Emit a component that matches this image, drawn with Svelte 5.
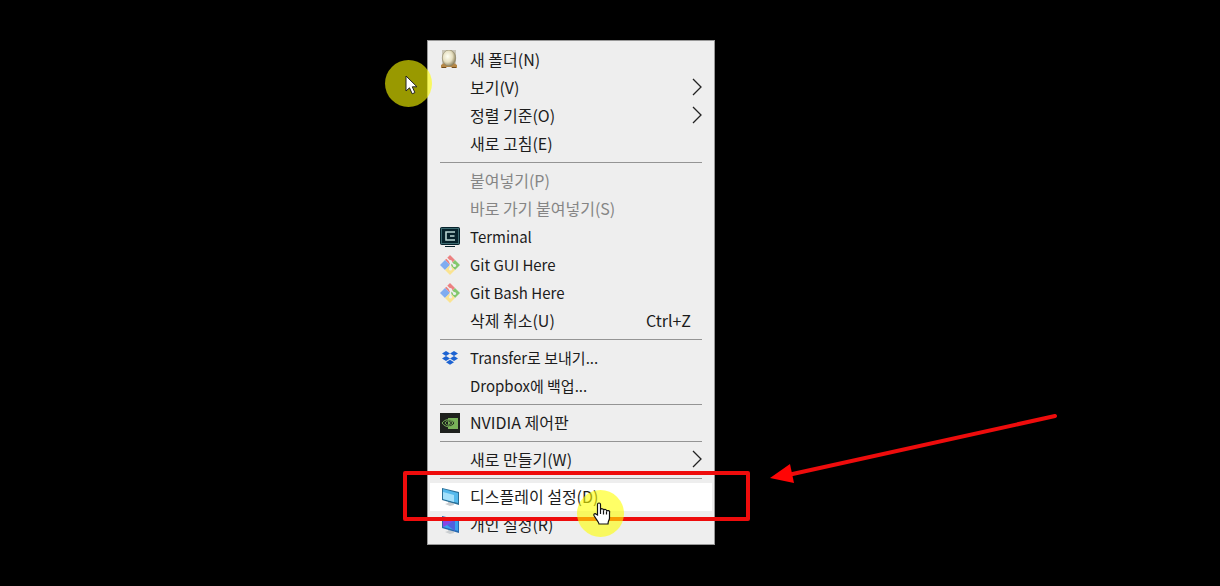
<script lang="ts">
  type Icon = 'egg' | 'terminal' | 'git' | 'dropbox' | 'nvidia' | 'display' | 'personal';

  interface Item {
    label: string;
    icon?: Icon;
    sub?: boolean;
    disabled?: boolean;
    latin?: boolean;
    shortcut?: string;
  }

  const groups: Item[][] = [
    [
      { label: '새 폴더(N)', icon: 'egg' },
      { label: '보기(V)', sub: true },
      { label: '정렬 기준(O)', sub: true },
      { label: '새로 고침(E)' },
    ],
    [
      { label: '붙여넣기(P)', disabled: true },
      { label: '바로 가기 붙여넣기(S)', disabled: true },
      { label: 'Terminal', icon: 'terminal', latin: true },
      { label: 'Git GUI Here', icon: 'git', latin: true },
      { label: 'Git Bash Here', icon: 'git', latin: true },
      { label: '삭제 취소(U)', shortcut: 'Ctrl+Z' },
    ],
    [
      { label: 'Transfer로 보내기...', icon: 'dropbox', latin: true },
      { label: 'Dropbox에 백업...', latin: true },
    ],
    [{ label: 'NVIDIA 제어판', icon: 'nvidia' }],
    [{ label: '새로 만들기(W)', sub: true }],
    [
      { label: '디스플레이 설정(D)', icon: 'display' },
      { label: '개인 설정(R)', icon: 'personal' },
    ],
  ];

  let active = $state('디스플레이 설정(D)');
</script>

<main class="desktop">
  <div class="menu" role="menu">
    {#each groups as group, i}
      {#if i > 0}
        <hr />
      {/if}
      {#each group as item}
        <button
          class="item"
          class:active={active === item.label}
          class:latin={item.latin}
          role="menuitem"
          disabled={item.disabled}
          onmouseenter={() => (active = item.label)}
        >
          <span class="icon">
            {#if item.icon === 'egg'}
              <svg viewBox="0 0 20 20">
                <defs>
                  <radialGradient id="shell" cx="0.4" cy="0.4" r="0.65">
                    <stop offset="0" stop-color="#fffff4" />
                    <stop offset="0.55" stop-color="#e6dfc0" />
                    <stop offset="1" stop-color="#867a56" />
                  </radialGradient>
                </defs>
                <path d="M2 0h14v14H2z" fill="#c9c5b8" />
                <path d="M1 15l3-2h10l3 2v3h-5l-1-1H7l-1 1H1z" fill="#b58746" />
                <path d="M2 17.500h4M12 17.500h4" stroke="#6e4a1d" />
                <ellipse cx="9" cy="8" rx="6.700" ry="8" fill="url(#shell)" stroke="#8d8468" stroke-width="0.600" />
              </svg>
            {:else if item.icon === 'terminal'}
              <svg viewBox="0 0 20 20">
                <rect x="0.500" y="0.500" width="19" height="17" rx="1" fill="#06222b" stroke="#06222b" />
                <rect x="1.500" y="1.500" width="17" height="15" fill="none" stroke="#3c6a70" />
                <path d="M15 5H6v8h9M14.500 9H10" fill="none" stroke="#b9d6d3" stroke-width="1.600" />
                <path d="M5 19.500h10" stroke="#06222b" />
              </svg>
            {:else if item.icon === 'git'}
              <svg viewBox="0 0 20 20">
                <path d="M10 0l5 5-5 5-5-5z" fill="#ec8181" />
                <path d="M5 5l5 5-5 5-5-5z" fill="#80acf0" />
                <path d="M15 5l5 5-5 5-5-5z" fill="#83c86e" />
                <path d="M10 10l5 5-5 5-5-5z" fill="#fae391" />
                <path d="M6 2.500l9 8.500M10.500 6.500v8" fill="none" stroke="#eee" stroke-width="1.500" />
                <circle cx="10.500" cy="6.500" r="1.600" fill="#eee" />
                <circle cx="14.500" cy="10.500" r="1.600" fill="#eee" />
                <circle cx="10.500" cy="14" r="1.600" fill="#eee" />
              </svg>
            {:else if item.icon === 'dropbox'}
              <svg viewBox="0 0 20 20" fill="#1d63d2">
                <path d="M6 3l4 2.500L6 8 2 5.500zM14 3l4 2.500L14 8l-4-2.500zM6 8l4 2.500L6 13l-4-2.500zM14 8l4 2.500-4 2.500-4-2.500zM10 11.800l4 2.400-4 2.600-4-2.600z" />
              </svg>
            {:else if item.icon === 'nvidia'}
              <svg viewBox="0 0 20 20">
                <path d="M0 0h20v20H0z" fill="#1e211d" />
                <path d="M8 5h10v11H8z" fill="#79b259" />
                <path d="M2 10c3-4 8-5 13 0-4 5-9 5-13 0z" fill="#1e211d" stroke="#79b259" />
                <path d="M5 10c2-3 5-3 8 0-3 3-6 3-8 0z" fill="none" stroke="#79b259" />
                <path d="M8 8v4l3-2z" fill="#79b259" />
              </svg>
            {:else if item.icon === 'display'}
              <svg viewBox="0 0 20 20">
                <path d="M8 14l5 1 1 3-4 1-5-2 3-1z" fill="#c9cdd0" />
                <path d="M2 1l17 4v13L2 13z" fill="#2b6f97" />
                <path d="M3 2l15 4v10L3 12z" fill="#55b9ec" />
                <path d="M3 5l11 3v7L3 12z" fill="#a3e0fb" />
              </svg>
            {:else if item.icon === 'personal'}
              <svg viewBox="0 0 20 20">
                <path d="M8 14l5 1 1 3-4 1-5-2 3-1z" fill="#c9cdd0" />
                <path d="M2 1l17 4v13L2 13z" fill="#2768ae" />
                <path d="M3 2l15 4v10L3 12z" fill="#38a0ef" />
                <path d="M3 2l13 3-9 5-4 2z" fill="#8745e6" />
                <path d="M15 5l-8 5 8 6z" fill="#4f61e0" />
              </svg>
            {/if}
          </span>
          <span class="label">{item.label}</span>
          {#if item.shortcut}
            <kbd>{item.shortcut}</kbd>
          {/if}
          {#if item.sub}
            <svg class="chevron" viewBox="0 0 10 18">
              <path d="M1 1l8 8-8 8" fill="none" stroke="#222" stroke-width="1.300" />
            </svg>
          {/if}
        </button>
      {/each}
    {/each}
  </div>

  <div class="frame"></div>

  <svg class="arrow" viewBox="0 0 290 74">
    <path d="M18 65L285 6" stroke="#ee0c0c" stroke-width="4" stroke-linecap="round" />
    <path d="M0 68l20-14 4 19z" fill="#ff0505" />
  </svg>

  <div class="spot start">
    <svg class="pointer" viewBox="0 0 13 20">
      <path d="M1 1v15l3.500-3.200 2.700 6 2.700-1.200-2.600-5.800H12z" fill="#fff" stroke="#222" />
    </svg>
  </div>
  <div class="spot end">
    <svg class="hand" viewBox="0 0 18 24">
      <path
        d="M4.500 13V2.500a1.500 1.500 0 0 1 3 0V8a1.500 1.500 0 0 1 3 .5 1.500 1.500 0 0 1 3 1 1.500 1.500 0 0 1 3 1.200V16c0 2-1.500 3-1.500 6H6c0-2-2.500-4-5-8.500-.6-1.800 1.200-2.300 2.300-1.200z"
        fill="#fff"
        stroke="#111"
        stroke-width="1.200"
      />
      <path d="M7.500 8v4M10.500 8.500v4M13.500 9.500v3" stroke="#111" stroke-width="1.200" />
    </svg>
  </div>
</main>

<style>
  :global(body) {
    margin: 0;
    background: #000;
  }

  .desktop {
    position: relative;
    min-height: 100vh;
    overflow: hidden;
    background: #000;
    font-family: "Noto Sans CJK KR", "Noto Sans", sans-serif;
    font-size: 16px;
  }

  .menu {
    position: absolute;
    left: 427px;
    top: 40px;
    width: 288px;
    box-sizing: border-box;
    padding: 5px 2px;
    background: #eee;
    border: 1px solid #989898;
  }

  .item {
    display: flex;
    align-items: flex-start;
    width: 100%;
    height: 28px;
    padding: 0 10px;
    border: 0;
    background: none;
    color: #1c1c1c;
    font: inherit;
    line-height: 26px;
    text-align: left;
  }

  .item.active {
    background: #fff;
  }

  .item.latin {
    font-size: 15px;
    line-height: 28px;
  }

  .item:disabled {
    color: #858585;
  }

  .icon {
    width: 20px;
    height: 20px;
    margin: 4px 10px 4px 0;
  }

  .icon svg {
    display: block;
    width: 20px;
    height: 20px;
  }

  .label {
    flex: 1;
    white-space: nowrap;
  }

  kbd {
    margin-right: 11px;
    font: inherit;
  }

  .chevron {
    width: 10px;
    height: 18px;
    margin-top: 4px;
  }

  hr {
    height: 1px;
    margin: 4px 10px;
    border: 0;
    background: #949494;
  }

  .frame {
    position: absolute;
    left: 403px;
    top: 471px;
    width: 347px;
    height: 50px;
    box-sizing: border-box;
    border: 4px solid #ee0c0c;
    border-radius: 2px;
    pointer-events: none;
  }

  .arrow {
    position: absolute;
    left: 770px;
    top: 410px;
    width: 290px;
    height: 74px;
  }

  .spot {
    position: absolute;
    width: 47px;
    height: 47px;
    border-radius: 50%;
    background: rgba(255, 255, 0, 0.6);
    pointer-events: none;
  }

  .start {
    left: 385px;
    top: 60px;
  }

  .end {
    left: 577px;
    top: 490px;
  }

  .pointer {
    position: absolute;
    left: 20px;
    top: 15px;
    width: 13px;
    height: 20px;
  }

  .hand {
    position: absolute;
    left: 16px;
    top: 12px;
    width: 18px;
    height: 24px;
  }
</style>
